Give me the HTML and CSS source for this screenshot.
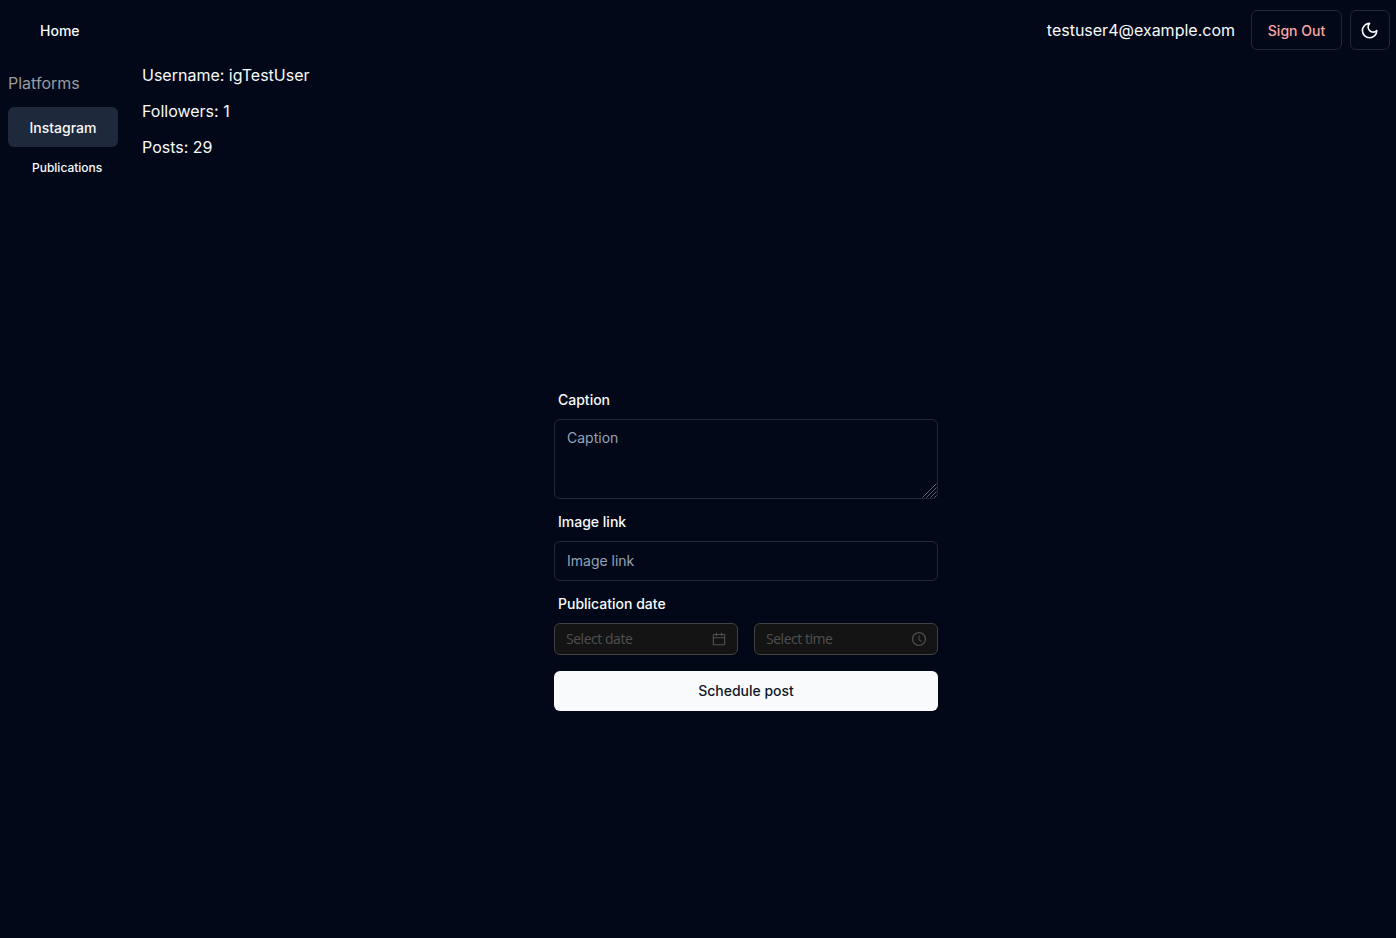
FILE: index.html
```html
<!DOCTYPE html>
<html lang="en">
<head>
<meta charset="utf-8">
<title>Instagram</title>
<link rel="stylesheet" href="styles.css">
</head>
<body>
<header class="header">
  <a class="home">Home</a>
  <div class="account">
    <span class="email">testuser4@example.com</span>
    <button class="btn sign-out">Sign Out</button>
    <button class="btn theme" aria-label="Toggle theme">
      <svg class="moon" viewBox="0 0 24 24"><path d="M12 3a6 6 0 0 0 9 9 9 9 0 1 1-9-9Z"/></svg>
    </button>
  </div>
</header>
<div class="layout">
  <nav class="sidebar">
    <div class="side-title">Platforms</div>
    <a class="side-item">Instagram</a>
    <a class="side-sub">Publications</a>
  </nav>
  <main class="main">
    <section class="stats">
      <p>Username: igTestUser</p>
      <p>Followers: 1</p>
      <p>Posts: 29</p>
    </section>
    <form class="form">
      <label class="label" for="caption">Caption</label>
      <div class="area-wrap">
        <textarea class="field area" id="caption" placeholder="Caption"></textarea>
        <svg class="grip" viewBox="0 0 15 15"><path d="M0.5 14.5L14.5 0.5M4.5 14.5L14.5 4.5M8.5 14.5L14.5 8.5M12.5 14.5L14.5 12.5"/></svg>
      </div>
      <label class="label" for="link">Image link</label>
      <input class="field link" id="link" placeholder="Image link">
      <span class="label">Publication date</span>
      <div class="pickers">
        <div class="picker"><span>Select date</span>
          <svg viewBox="64 64 896 896"><path d="M880 184H712v-64c0-4.400-3.600-8-8-8h-56c-4.400 0-8 3.600-8 8v64H384v-64c0-4.400-3.600-8-8-8h-56c-4.400 0-8 3.600-8 8v64H144c-17.700 0-32 14.300-32 32v664c0 17.700 14.300 32 32 32h736c17.700 0 32-14.300 32-32V216c0-17.700-14.300-32-32-32zm-40 656H184V460h656v380zM184 392V256h128v48c0 4.400 3.600 8 8 8h56c4.400 0 8-3.600 8-8v-48h256v48c0 4.400 3.600 8 8 8h56c4.400 0 8-3.600 8-8v-48h128v136H184z"/></svg>
        </div>
        <div class="picker"><span>Select time</span>
          <svg viewBox="64 64 896 896"><path d="M512 64C264.600 64 64 264.600 64 512s200.600 448 448 448 448-200.600 448-448S759.400 64 512 64zm0 820c-205.400 0-372-166.600-372-372s166.600-372 372-372 372 166.600 372 372-166.600 372-372 372z"/><path d="M686.700 638.600L544.100 535.500V288c0-4.400-3.600-8-8-8H488c-4.400 0-8 3.600-8 8v275.400c0 2.600 1.200 5 3.300 6.500l165.400 120.600c3.600 2.600 8.600 1.800 11.200-1.700l28.600-39c2.600-3.700 1.800-8.700-1.800-11.200z"/></svg>
        </div>
      </div>
      <button class="submit" type="button">Schedule post</button>
    </form>
  </main>
</div>
</body>
</html>
```

FILE: styles.css
```css
* { box-sizing: border-box; }
body {
  margin: 0;
  height: 938px;
  display: flex;
  flex-direction: column;
  overflow: hidden;
  background: #020817;
  color: #f8fafc;
  font: 16px/24px Inter, sans-serif;
}
button, input, textarea { font-family: inherit; }
.header {
  height: 60px;
  display: flex;
  align-items: center;
  justify-content: space-between;
  padding: 0 6px 0 40px;
}
.home { font-size: 14px; font-weight: 500; line-height: 20px; padding-top: 2px; }
.account { display: flex; align-items: center; gap: 8px; }
.email { margin-right: 8px; }
.btn {
  height: 40px;
  display: flex;
  align-items: center;
  justify-content: center;
  padding: 0;
  border: 1px solid #1e293b;
  border-radius: 6px;
  background: transparent;
  color: #f8fafc;
  font-size: 14px;
  font-weight: 500;
}
.sign-out { width: 91px; color: #fca5a5; padding-top: 1px; }
.theme { width: 40px; padding-top: 1px; }
.moon {
  width: 19.2px;
  height: 19.2px;
  fill: none;
  stroke: currentColor;
  stroke-width: 2;
  stroke-linecap: round;
  stroke-linejoin: round;
}
.layout { flex: 1; display: flex; }
.sidebar { width: 142px; padding: 11px 24px 0 8px; }
.side-title { color: #9a9aa0; margin-bottom: 12px; }
.side-item {
  height: 40px;
  display: flex;
  align-items: center;
  justify-content: center;
  padding-top: 1px;
  border-radius: 6px;
  background: #1e293b;
  font-size: 14px;
  font-weight: 500;
}
.side-sub { display: block; padding: 13px 0 0 24px; font-size: 12px; font-weight: 500; line-height: 16px; }
.main { flex: 1; display: flex; flex-direction: column; }
.stats { display: flex; flex-direction: column; gap: 12px; padding-top: 3px; }
.stats p { margin: 0; }
.form { width: 384px; margin: 227px 0 0 412px; display: flex; flex-direction: column; }
.label { margin: 4px 4px 9px; font-size: 14px; font-weight: 500; line-height: 20px; }
.field {
  display: block;
  width: 100%;
  height: 40px;
  margin: 0 0 9px;
  padding: 8px 12px;
  border: 1px solid #1e293b;
  border-radius: 6px;
  background: transparent;
  color: #f8fafc;
  font-size: 14px;
  line-height: 20px;
}
.field::placeholder { color: #94a3b8; opacity: 1; }
.link { padding: 7px 12px 9px; }
.area-wrap { position: relative; }
.area { height: 80px; resize: none; }
.grip { position: absolute; right: 1px; bottom: 10px; width: 15px; height: 15px; fill: none; stroke: #5f6269; stroke-width: 1; }
.pickers { display: flex; gap: 16px; margin-bottom: 16px; }
.picker {
  flex: 1;
  height: 32px;
  display: flex;
  align-items: center;
  justify-content: space-between;
  padding: 0 11px;
  border: 1px solid #424242;
  border-radius: 6px;
  background: #141414;
  color: #4f4f4f;
  font: 14px/22px "Open Sans", sans-serif;
  letter-spacing: -0.47px;
}
.picker svg { width: 14px; height: 14px; fill: #4f4f4f; }
.submit {
  height: 40px;
  padding: 0 0 1px;
  border: 0;
  border-radius: 6px;
  background: #f8fafc;
  color: #0f172a;
  font-size: 14px;
  font-weight: 500;
}
```
